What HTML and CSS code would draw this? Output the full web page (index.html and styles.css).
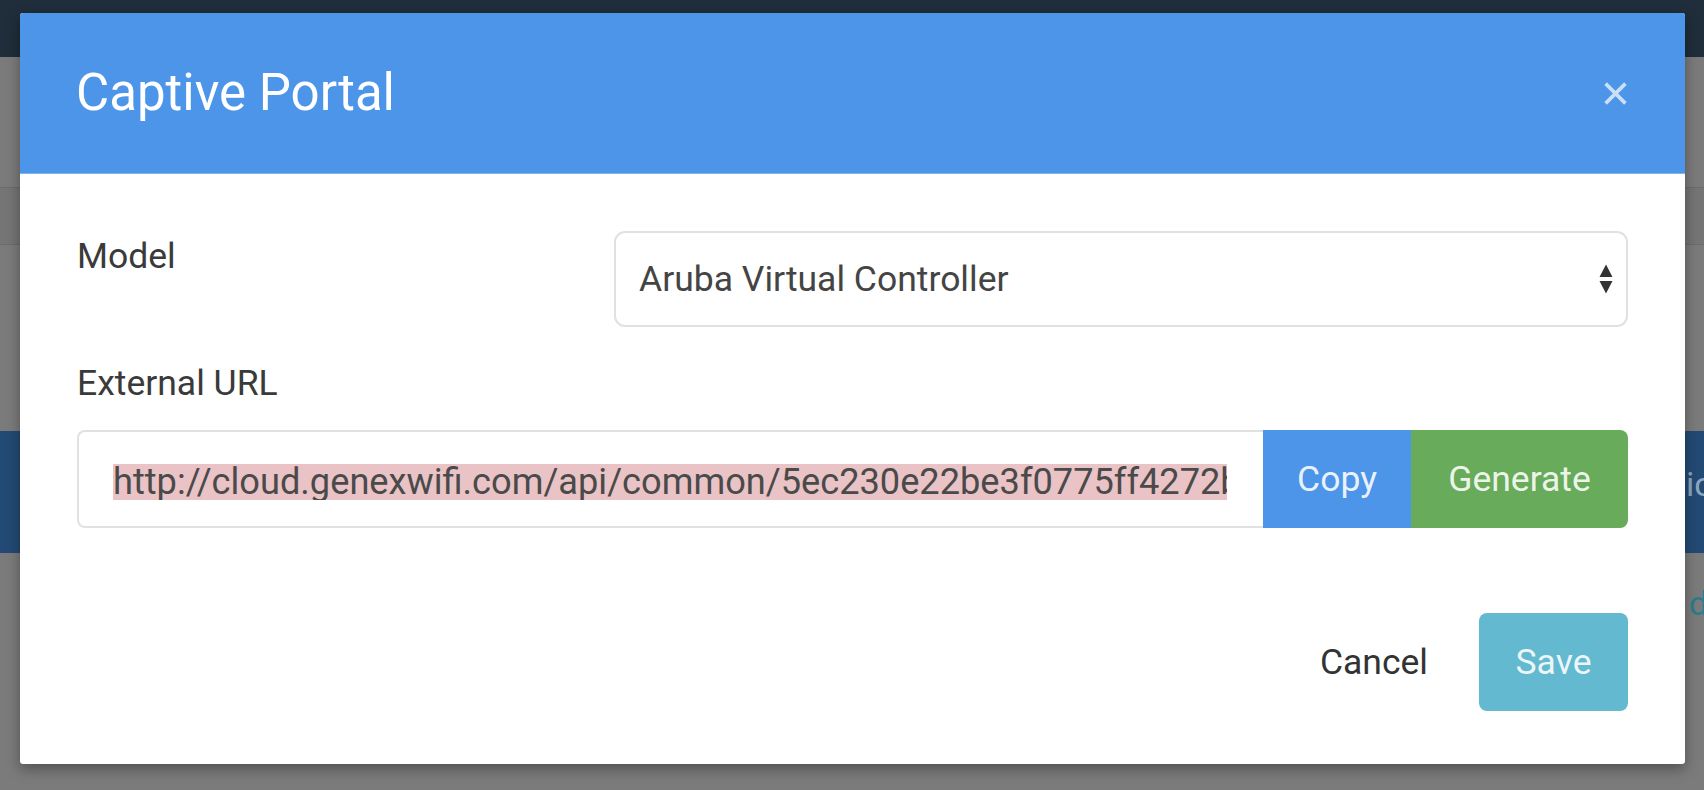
FILE: index.html
```html
<!DOCTYPE html>
<html lang="en">
<head>
<meta charset="utf-8">
<title>Captive Portal</title>
<link rel="stylesheet" href="styles.css">
</head>
<body>
  <div class="page">
    <div class="topbar"></div>
    <div class="gap-a"></div>
    <div class="row-dark"></div>
    <div class="gap-b"></div>
    <div class="blueband"><span class="edge-text">ic</span></div>
    <div class="rest"><span class="edge-teal">d</span></div>
  </div>

  <div class="modal">
    <div class="modal-header">
      <h4 class="modal-title">Captive Portal</h4>
      <svg class="close" width="25" height="25" viewBox="0 0 24 24" aria-label="Close">
        <path d="M2.5 2.5 L21.5 21.5 M21.5 2.5 L2.5 21.5" stroke="currentColor" stroke-width="3.5" fill="none"/>
      </svg>
    </div>
    <div class="modal-body">
      <div class="row-model">
        <label class="field-label">Model</label>
        <div class="select">
          <span>Aruba Virtual Controller</span>
          <svg class="select-arrows" width="14" height="32" viewBox="0 0 14 32">
            <path d="M0.5 14 L7 1.5 L13.5 14 Z M0.5 18 L13.5 18 L7 30.5 Z" fill="#333"/>
          </svg>
        </div>
      </div>
      <label class="field-label label-url">External URL</label>
      <div class="input-group">
        <div class="url-field">
          <div class="url-clip"><span class="url-sel">http://cloud.genexwifi.com/api/common/5ec230e22be3f0775ff4272b</span></div>
        </div>
        <button class="btn btn-copy">Copy</button>
        <button class="btn btn-generate">Generate</button>
      </div>
    </div>
    <div class="modal-footer">
      <button class="btn btn-cancel">Cancel</button>
      <button class="btn btn-save">Save</button>
    </div>
  </div>
</body>
</html>
```
FILE: styles.css
```css
* { box-sizing: border-box; }

html, body {
  margin: 0;
  height: 100%;
}

body {
  font-family: Roboto, "Liberation Sans", sans-serif;
  background: #7b7b7b;
  overflow: hidden;
  position: relative;
}

/* dimmed page behind the modal */
.page {
  height: 790px;
  display: flex;
  flex-direction: column;
}
.topbar { height: 57px; background: #1f2e3a; }
.gap-a { height: 130px; }
.row-dark {
  height: 58px;
  background: #757575;
  border-top: 1px solid #6b6b6b;
  border-bottom: 1px solid #6b6b6b;
}
.gap-b { height: 186px; }
.blueband {
  height: 122px;
  background: #234a74;
  display: flex;
  justify-content: flex-end;
  align-items: center;
}
.edge-text {
  color: #8ea5bf;
  font-size: 34px;
  margin-right: -8px;
  margin-bottom: 16px;
}
.rest {
  flex: 1;
  display: flex;
  justify-content: flex-end;
  align-items: flex-start;
  padding-top: 30px;
}
.edge-teal {
  color: #2c7d8b;
  font-size: 34px;
  margin-right: -4px;
}

/* modal */
.modal {
  position: absolute;
  left: 20px;
  top: 13px;
  width: 1665px;
  background: #fff;
  border-radius: 3px;
  overflow: hidden;
  box-shadow: 0 5px 14px rgba(0, 0, 0, 0.35);
}

.modal-header {
  height: 161px;
  background: #4d95e8;
  border-bottom: 1px solid #7db4ef;
  padding: 0 57px 0 56px;
  display: flex;
  align-items: center;
  justify-content: space-between;
}

.modal-title {
  margin: 0;
  font-size: 51px;
  font-weight: 400;
  line-height: 1.1;
  color: #ffffff;
}

.close {
  color: rgba(255, 255, 255, 0.7);
  display: block;
}

.modal-body {
  padding: 57px 57px 0 57px;
}

.row-model {
  display: grid;
  grid-template-columns: 537px 1fr;
  align-items: start;
}

.field-label {
  display: block;
  font-size: 35.5px;
  line-height: 50px;
  color: #3a3a3a;
}

.select {
  height: 96px;
  border: 2px solid #e1e1e1;
  border-radius: 11px;
  padding: 0 13px 0 23px;
  display: flex;
  align-items: center;
  justify-content: space-between;
  font-size: 35.5px;
  color: #444;
}

.label-url {
  margin-top: 31px;
}

.input-group {
  margin-top: 22px;
  height: 98px;
  display: flex;
}

.url-field {
  flex: 1;
  min-width: 0;
  border: 2px solid #e1e1e1;
  border-right: none;
  border-radius: 8px 0 0 8px;
  padding: 0 36px 0 34px;
  display: flex;
  align-items: center;
}

.url-clip {
  flex: 1;
  min-width: 0;
  overflow: hidden;
  white-space: nowrap;
}

.url-sel {
  display: inline-block;
  background: #e9c3c5;
  color: #4a4a4a;
  font-size: 36.2px;
  line-height: 36px;
  height: 36px;
  white-space: nowrap;
  margin-top: 6px;
}

.btn {
  font-family: inherit;
  font-size: 35.5px;
  border: none;
  cursor: pointer;
  height: 98px;
  padding: 0;
  text-align: center;
  white-space: nowrap;
}

.btn-copy {
  width: 148px;
  flex: none;
  background: #4d95e8;
  color: rgba(255, 255, 255, 0.9);
}

.btn-generate {
  width: 217px;
  flex: none;
  background: #67ab5b;
  color: rgba(255, 255, 255, 0.9);
  border-radius: 0 8px 8px 0;
}

.modal-footer {
  margin-top: 85px;
  padding: 0 57px 53px 57px;
  display: flex;
  justify-content: flex-end;
  align-items: center;
  gap: 13px;
}

.btn-cancel {
  background: none;
  color: #333;
  padding: 0 38px;
}

.btn-save {
  width: 149px;
  background: #63b9d0;
  color: rgba(255, 255, 255, 0.88);
  border-radius: 8px;
}
```
